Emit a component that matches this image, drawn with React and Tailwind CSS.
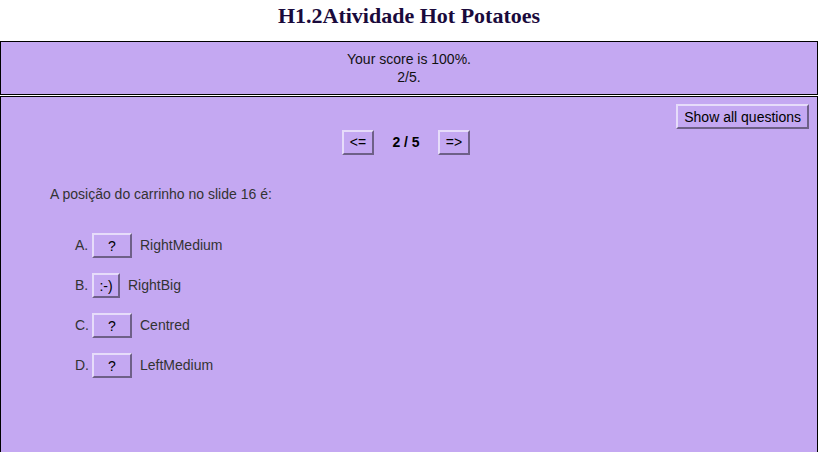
export default function App() {
  const btn =
    "bg-[#c4a8f2] border-2 border-t-[#e6dcfa] border-l-[#e6dcfa] border-b-[#6e6088] border-r-[#6e6088] text-[14px] text-black leading-none";
  const options = [
    { l: "A.", b: "?", t: "RightMedium", w: "w-[40px]" },
    { l: "B.", b: ":-)", t: "RightBig", w: "w-[28px]" },
    { l: "C.", b: "?", t: "Centred", w: "w-[40px]" },
    { l: "D.", b: "?", t: "LeftMedium", w: "w-[40px]" },
  ];
  return (
    <div className="w-[818px] h-[452px] overflow-hidden bg-white font-['Liberation_Sans',Arial,sans-serif]">
      <h1 className="h-[41px] pt-[4px] text-center font-['Liberation_Serif',Georgia,serif] font-bold text-[22px] leading-[24px] text-[#1a0a3c]">
        H1.2Atividade Hot Potatoes
      </h1>
      <div className="border border-black bg-[#c4a8f2] h-[54px] pt-[8px] text-center text-[14px] leading-[18px] text-[#111]">
        <div>Your score is 100%.</div>
        <div>2/5.</div>
      </div>
      <div className="mt-[1px] border border-black bg-[#c4a8f2] h-[400px] px-[7px] pt-[7px]">
        <div className="flex justify-end mr-[1px]">
          <button className={btn + " h-[25px] px-[6px]"}>Show all questions</button>
        </div>
        <div className="flex justify-center items-center gap-0 h-[26px] mr-[6px]">
          <button className={btn + " h-[25px] w-[32px]"}>&lt;=</button>
          <span className="w-[64px] text-center font-bold text-[14px] text-black">2 / 5</span>
          <button className={btn + " h-[25px] w-[32px]"}>=&gt;</button>
        </div>
        <div className="mt-[31px] ml-[42px] text-[14px] leading-[16px] text-[#333]">
          A posição do carrinho no slide 16 é:
        </div>
        <div className="mt-[31px] ml-[67px] flex flex-col gap-[15px]">
          {options.map((o) => (
            <div key={o.l} className="flex items-center h-[25px] text-[14px] text-[#333]">
              <span className="w-[17px]">{o.l}</span>
              <button className={btn + " h-[25px] " + o.w}>{o.b}</button>
              <span className="ml-[8px]">{o.t}</span>
            </div>
          ))}
        </div>
      </div>
    </div>
  );
}
